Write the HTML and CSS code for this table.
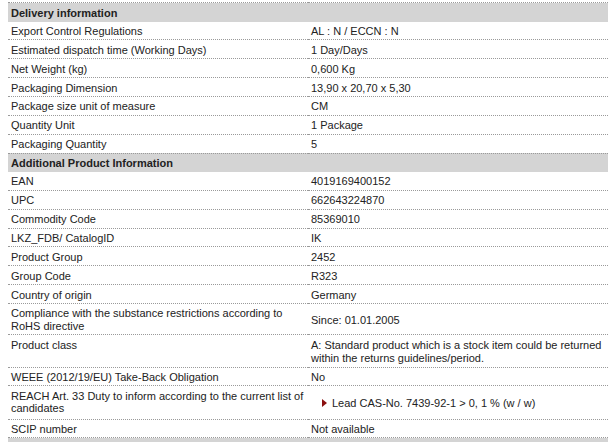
FILE: index.html
```html
<!DOCTYPE html>
<html>
<head>
<meta charset="utf-8">
<link rel="stylesheet" href="styles.css">
</head>
<body>
<table class="spec">
  <tbody>
    <tr class="head"><th colspan="2">Delivery information</th></tr>
    <tr><td class="lbl">Export Control Regulations</td><td class="val">AL : N / ECCN : N</td></tr>
    <tr><td class="lbl">Estimated dispatch time (Working Days)</td><td class="val">1 Day/Days</td></tr>
    <tr><td class="lbl">Net Weight (kg)</td><td class="val">0,600 Kg</td></tr>
    <tr><td class="lbl">Packaging Dimension</td><td class="val">13,90 x 20,70 x 5,30</td></tr>
    <tr><td class="lbl">Package size unit of measure</td><td class="val">CM</td></tr>
    <tr><td class="lbl">Quantity Unit</td><td class="val">1 Package</td></tr>
    <tr><td class="lbl">Packaging Quantity</td><td class="val">5</td></tr>
    <tr class="head"><th colspan="2">Additional Product Information</th></tr>
    <tr><td class="lbl">EAN</td><td class="val">4019169400152</td></tr>
    <tr><td class="lbl">UPC</td><td class="val">662643224870</td></tr>
    <tr><td class="lbl">Commodity Code</td><td class="val">85369010</td></tr>
    <tr><td class="lbl">LKZ_FDB/ CatalogID</td><td class="val">IK</td></tr>
    <tr><td class="lbl">Product Group</td><td class="val">2452</td></tr>
    <tr><td class="lbl">Group Code</td><td class="val">R323</td></tr>
    <tr><td class="lbl">Country of origin</td><td class="val">Germany</td></tr>
    <tr class="rohs"><td class="lbl">Compliance with the substance restrictions according to RoHS directive</td><td class="val">Since: 01.01.2005</td></tr>
    <tr class="tall"><td class="lbl">Product class</td><td class="val">A: Standard product which is a stock item could be returned within the returns guidelines/period.</td></tr>
    <tr><td class="lbl">WEEE (2012/19/EU) Take-Back Obligation</td><td class="val">No</td></tr>
    <tr class="reach"><td class="lbl">REACH Art. 33 Duty to inform according to the current list of candidates</td><td class="val"><div class="substance"><span class="arrow"></span>Lead CAS-No. 7439-92-1 &gt; 0, 1 % (w / w)</div></td></tr>
    <tr><td class="lbl">SCIP number</td><td class="val">Not available</td></tr>
    <tr class="head"><th colspan="2">&nbsp;</th></tr>
  </tbody>
</table>
</body>
</html>
```
FILE: styles.css
```css
html, body {
  margin: 0;
  padding: 0;
  background: #ffffff;
}
body {
  padding: 2px 6px 0 8px;
  font-family: "Liberation Sans", Arial, sans-serif;
  font-size: 11px;
  line-height: 12.4px;
  color: #222222;
}
.spec {
  width: 600px;
  border-collapse: collapse;
  border-top: 1px dotted #9a9a9a;
  table-layout: fixed;
}
.spec th,
.spec td {
  padding: 3.4px 3px 2.05px 3px;
  text-align: left;
  border-bottom: 1px dotted #9a9a9a;
}
.head th {
  background: #d4d4d4;
  font-weight: bold;
  border-bottom: 1px solid #d4d4d4;
  padding-top: 3.6px;
  padding-bottom: 1.6px;
}
.lbl {
  width: 294px;
  vertical-align: top;
}
.val {
  vertical-align: middle;
}
.rohs td {
  padding-bottom: 1.4px;
}
.tall td {
  padding-top: 4.8px;
  padding-bottom: 2.3px;
  vertical-align: top;
}
.reach td {
  padding-bottom: 4px;
}
.substance {
  display: flex;
  align-items: center;
  padding: 2px 0 0 11px;
}
.arrow {
  width: 0;
  height: 0;
  border-top: 4px solid transparent;
  border-bottom: 4px solid transparent;
  border-left: 5px solid #8b1010;
  margin-right: 5px;
}
```
